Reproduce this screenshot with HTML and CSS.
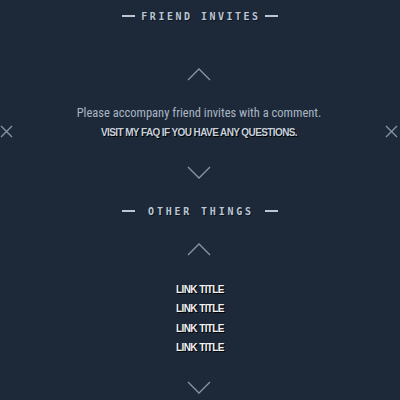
FILE: index.html
```html
<!DOCTYPE html>
<html>
<head>
<meta charset="utf-8">
<link rel="stylesheet" href="styles.css">
</head>
<body>
<div class="page">
  <h2 class="heading first"><span class="dash"></span><span class="htext">FRIEND INVITES</span><span class="dash"></span></h2>
  <svg class="chev up" width="24" height="14" viewBox="0 0 24 14"><polyline points="1,13 12,2 23,13" fill="none" stroke="#8797a8" stroke-width="1.3"/></svg>
  <div class="row">
    <svg class="x" width="13" height="13" viewBox="0 0 13 13"><path d="M1 1L12 12M12 1L1 12" stroke="#8797a8" stroke-width="1.3" fill="none"/></svg>
    <div class="msg">
      <p class="lead">Please accompany friend invites with a comment.</p>
      <p class="faq">VISIT MY FAQ IF YOU HAVE ANY QUESTIONS.</p>
    </div>
    <svg class="x" width="13" height="13" viewBox="0 0 13 13"><path d="M1 1L12 12M12 1L1 12" stroke="#8797a8" stroke-width="1.3" fill="none"/></svg>
  </div>
  <svg class="chev down" width="24" height="14" viewBox="0 0 24 14"><polyline points="1,1 12,12 23,1" fill="none" stroke="#8797a8" stroke-width="1.3"/></svg>
  <h2 class="heading second"><span class="dash"></span><span class="htext">OTHER THINGS</span><span class="dash"></span></h2>
  <svg class="chev up2" width="24" height="14" viewBox="0 0 24 14"><polyline points="1,13 12,2 23,13" fill="none" stroke="#8797a8" stroke-width="1.3"/></svg>
  <ul class="links">
    <li><a href="#">LINK TITLE</a></li>
    <li><a href="#">LINK TITLE</a></li>
    <li><a href="#">LINK TITLE</a></li>
    <li><a href="#">LINK TITLE</a></li>
  </ul>
  <svg class="chev down2" width="24" height="14" viewBox="0 0 24 14"><polyline points="1,1 12,12 23,1" fill="none" stroke="#8797a8" stroke-width="1.3"/></svg>
</div>
</body>
</html>
```
FILE: styles.css
```css
html, body {
  margin: 0;
  padding: 0;
  background: #1d2939;
}
.page {
  display: flex;
  flex-direction: column;
  align-items: center;
  height: 400px;
  overflow: hidden;
}
.heading {
  margin: 0;
  width: 157px;
  display: flex;
  align-items: center;
  justify-content: space-between;
  height: 12px;
  font-family: "DejaVu Sans Mono", monospace;
  font-size: 10px;
  font-weight: bold;
  letter-spacing: 2.5px;
  color: #bac6d3;
  text-shadow: 1px 1px 0 #0d1520;
}
.heading.first { margin-top: 10px; }
.heading.second { margin-top: 25px; }
.heading.second .htext { letter-spacing: 2.8px; }
.htext { margin-right: -2px; }
.dash {
  display: inline-block;
  width: 13px;
  height: 2px;
  background: #bac6d3;
}
.chev { display: block; margin-right: 3px; }
.chev.up { margin-top: 45px; }
.chev.down { margin-top: 26px; }
.chev.up2 { margin-top: 25px; }
.chev.down2 { margin-top: 28px; }
.row {
  align-self: stretch;
  display: flex;
  align-items: center;
  padding: 0 2px 0 0;
  margin-top: 23px;
}
.x { display: block; flex: none; margin-top: 18px; }
.msg {
  flex: 1;
  text-align: center;
}
.lead {
  margin: 0;
  font-family: "Liberation Sans Narrow", "Roboto Condensed", "Liberation Sans", sans-serif;
  font-size: 12.5px;
  line-height: 18px;
  color: #a9b6c3;
}
.faq {
  margin: 4px 0 0;
  font-family: "Liberation Sans Narrow", "Liberation Sans", sans-serif;
  font-size: 10px;
  font-weight: bold;
  letter-spacing: -0.6px;
  line-height: 14px;
  color: #c7d1dc;
  text-shadow: 1px 1px 0 #000;
}
.links {
  list-style: none;
  margin: 25px 0 0;
  padding: 0;
  display: flex;
  flex-direction: column;
  align-items: center;
  gap: 5.4px;
}
.links li { line-height: 14px; height: 14px; }
.links a {
  font-family: "Liberation Sans Narrow", "Liberation Sans", sans-serif;
  font-size: 10px;
  font-weight: bold;
  letter-spacing: -0.6px;
  color: #f2f2f2;
  text-decoration: none;
  text-shadow: 1px 1px 0 #000;
}
```
